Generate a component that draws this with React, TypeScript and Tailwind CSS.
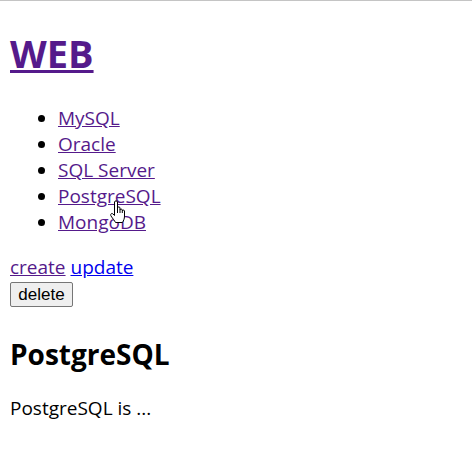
export default function App() {
  const topics = ['MySQL', 'Oracle', 'SQL Server', 'PostgreSQL', 'MongoDB']

  return (
    <div
      className="relative min-h-[451px] bg-white border-t border-[#c4c4c4] px-[10px] pt-px text-black"
      style={{ fontFamily: '"Open Sans", "Noto Sans CJK KR", sans-serif' }}
    >
      <h1 className="text-[38px] font-bold leading-[53px] mt-[25px] mb-[25px]">
        <a href="#" className="text-[#551a8b] underline">WEB</a>
      </h1>

      <ul className="list-disc pl-[48px] text-[19px] leading-[26px] mb-[19px]">
        {topics.map((t) => (
          <li key={t} className="marker:text-black">
            <a href="#" className="text-[#551a8b] underline">{t}</a>
          </li>
        ))}
      </ul>

      <div className="text-[19px] leading-[26px]">
        <a href="#" className="text-[#551a8b] underline">create</a>{' '}
        <a href="#" className="text-[#0000ee] underline">update</a>
      </div>
      <button
        className="block mt-[2px] h-[25px] min-h-[25px] w-[63px] px-0 text-[17px] leading-[23px] border border-[#767676] rounded-[2px] bg-[#efefef]"
        style={{ fontFamily: '"Liberation Sans", Arial, sans-serif' }}
      >
        delete
      </button>

      <h2 className="text-[28px] font-bold leading-[38px] mt-[28px] mb-[22px]">PostgreSQL</h2>
      <p className="text-[19px] leading-[26px]">PostgreSQL is ...</p>

      {/* mouse cursor over the list */}
      <svg
        className="absolute left-[110px] top-[199px]"
        width="17"
        height="24"
        viewBox="0 0 17 24"
      >
        <path
          d="M4.5 2 C4.5 0.5 7.5 0.5 7.5 2 L7.5 9 L7.5 8 C7.5 6.5 10 6.5 10 8 L10 10 C10 8.8 12.3 8.8 12.3 10 L12.3 11 C12.3 9.8 14.5 9.8 14.5 11 L14.5 16 C14.5 19 13.5 20.5 12.5 22.5 L5.5 22.5 C4.5 20.5 3 19 1 16 C0 14.5 1.5 12.5 3 14 L4.5 15.5 Z"
          fill="#fff"
          stroke="#000"
          strokeWidth="1"
          strokeLinejoin="round"
        />
        <path d="M7.5 9 L7.5 13 M10 10 L10 13 M12.3 11 L12.3 13" stroke="#000" strokeWidth="1" />
      </svg>
    </div>
  )
}
